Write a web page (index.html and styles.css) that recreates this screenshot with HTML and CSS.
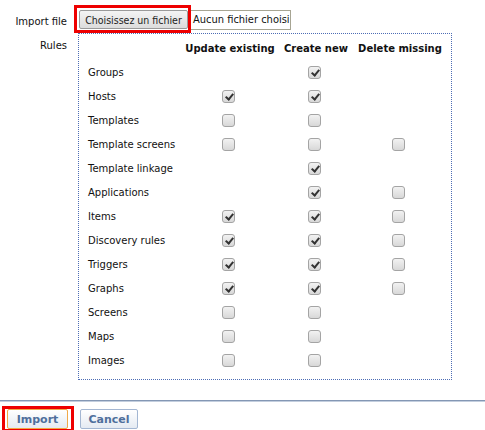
FILE: index.html
```html
<!DOCTYPE html>
<html>
<head>
<meta charset="utf-8">
<link rel="stylesheet" href="styles.css">
</head>
<body>
<div class="form">
  <div class="lbl lbl-file">Import file</div>
  <div class="file-field">
    <span class="hl hl-file"><span class="filebtn">Choisissez un fichier</span></span><span class="filename">Aucun fichier choisi</span>
  </div>
  <div class="lbl lbl-rules">Rules</div>
  <div class="rules">
    <div class="hdr"></div><div class="hdr">Update existing</div><div class="hdr">Create new</div><div class="hdr">Delete missing</div>

    <div class="name">Groups</div><div class="c"></div><div class="c"><i class="cb on"></i></div><div class="c"></div>
    <div class="name">Hosts</div><div class="c"><i class="cb on"></i></div><div class="c"><i class="cb on"></i></div><div class="c"></div>
    <div class="name">Templates</div><div class="c"><i class="cb"></i></div><div class="c"><i class="cb"></i></div><div class="c"></div>
    <div class="name">Template screens</div><div class="c"><i class="cb"></i></div><div class="c"><i class="cb"></i></div><div class="c"><i class="cb"></i></div>
    <div class="name">Template linkage</div><div class="c"></div><div class="c"><i class="cb on"></i></div><div class="c"></div>
    <div class="name">Applications</div><div class="c"></div><div class="c"><i class="cb on"></i></div><div class="c"><i class="cb"></i></div>
    <div class="name">Items</div><div class="c"><i class="cb on"></i></div><div class="c"><i class="cb on"></i></div><div class="c"><i class="cb"></i></div>
    <div class="name">Discovery rules</div><div class="c"><i class="cb on"></i></div><div class="c"><i class="cb on"></i></div><div class="c"><i class="cb"></i></div>
    <div class="name">Triggers</div><div class="c"><i class="cb on"></i></div><div class="c"><i class="cb on"></i></div><div class="c"><i class="cb"></i></div>
    <div class="name">Graphs</div><div class="c"><i class="cb on"></i></div><div class="c"><i class="cb on"></i></div><div class="c"><i class="cb"></i></div>
    <div class="name">Screens</div><div class="c"><i class="cb"></i></div><div class="c"><i class="cb"></i></div><div class="c"></div>
    <div class="name">Maps</div><div class="c"><i class="cb"></i></div><div class="c"><i class="cb"></i></div><div class="c"></div>
    <div class="name">Images</div><div class="c"><i class="cb"></i></div><div class="c"><i class="cb"></i></div><div class="c"></div>
  </div>
</div>
<div class="footer">
  <span class="hl hl-import"><span class="btn btn-import">Import</span></span>
  <span class="btn btn-cancel">Cancel</span>
</div>
</body>
</html>
```

FILE: styles.css
```css
html, body {
  margin: 0;
  padding: 0;
  background: #ffffff;
  font-family: "DejaVu Sans", Verdana, sans-serif;
  font-size: 10px;
  color: #111111;
}

.form {
  display: grid;
  grid-template-columns: 74px 1fr;
  padding-top: 5px;
}

.lbl {
  text-align: right;
  padding-right: 7px;
}

.lbl-file {
  padding-top: 11px;
}

.lbl-rules {
  padding-top: 7px;
}

.file-field {
  display: flex;
  align-items: flex-start;
}

.hl {
  display: inline-flex;
  border: 3px solid #ee0000;
}

.hl-file {
  padding: 2px 0 1px 2px;
}

.filebtn {
  display: flex;
  align-items: center;
  justify-content: center;
  box-sizing: border-box;
  width: 109px;
  height: 19px;
  border: 1px solid #9a9a9a;
  border-radius: 2px;
  background: linear-gradient(#f4f4f4, #dcdcdc);
  font-family: "DejaVu Sans Condensed", "DejaVu Sans", sans-serif;
  font-size: 10.5px;
  color: #222222;
}

.filename {
  box-sizing: border-box;
  margin-top: 5px;
  width: 100px;
  height: 20px;
  border: 1px solid #a7a593;
  border-left: none;
  padding-left: 2px;
  line-height: 18px;
  white-space: nowrap;
  overflow: hidden;
  font-family: "DejaVu Sans Condensed", "DejaVu Sans", sans-serif;
  font-size: 11px;
  color: #111111;
}

.rules {
  justify-self: start;
  margin-left: 4px;
  width: 374px;
  box-sizing: border-box;
  border: 1px dotted #4d6db5;
  padding: 2px 0 7px 9px;
  display: grid;
  grid-template-columns: 94px 96px 76px 92px;
  grid-auto-rows: 24px;
}

.hdr {
  display: flex;
  align-items: center;
  justify-content: center;
  font-weight: bold;
  white-space: nowrap;
}

.name {
  display: flex;
  align-items: center;
  white-space: nowrap;
}

.c {
  display: flex;
  align-items: center;
  justify-content: center;
  padding-right: 3px;
}

.cb {
  display: block;
  position: relative;
  box-sizing: border-box;
  width: 13px;
  height: 13px;
  border: 1px solid #a4a4a4;
  border-radius: 3px;
  background: linear-gradient(#f2f2f2, #d8d8d8);
}

.cb.on::after {
  content: "";
  position: absolute;
  left: 4px;
  top: 1px;
  width: 3px;
  height: 6px;
  border: solid #333333;
  border-width: 0 2px 2px 0;
  transform: rotate(40deg);
}

.footer {
  margin-top: 20px;
  border-top: 1px solid #8497b4;
  box-shadow: inset 0 1px 0 #c3cede;
  padding: 5px 0 0 2px;
  display: flex;
  align-items: flex-start;
  gap: 6px;
}

.hl-import {
  padding: 0 3px 0 2px;
}

.btn {
  display: flex;
  align-items: center;
  justify-content: center;
  box-sizing: border-box;
  height: 20px;
  border-radius: 2px;
  background: linear-gradient(#ffffff, #e4eaf2);
  font-weight: bold;
  font-size: 11px;
  color: #4f6f9c;
}

.btn-import {
  width: 61px;
  border: 1px solid #f0a848;
}

.btn-cancel {
  margin-top: 3px;
  width: 58px;
  border: 1px solid #a3b6d2;
}
```
